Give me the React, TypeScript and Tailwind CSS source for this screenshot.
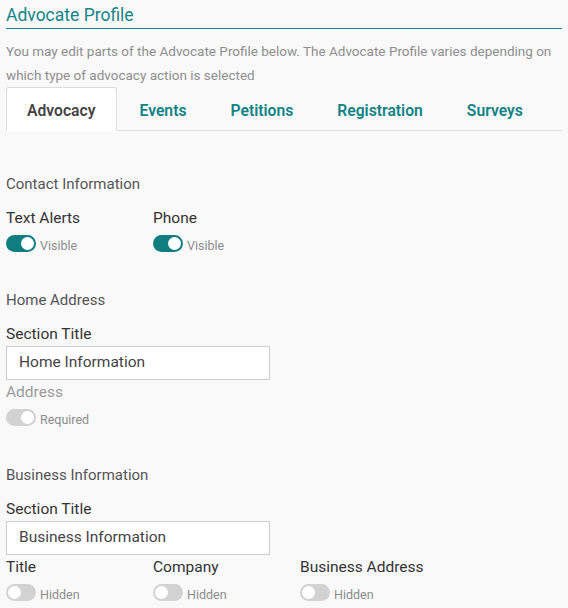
import React from "react";

const F = { fontFamily: "Roboto, 'Open Sans', sans-serif" };

function Toggle({ on, disabled, label }: { on: boolean; disabled?: boolean; label: string }) {
  const bg = disabled ? "bg-[#d2d2d2]" : on ? "bg-[#107e81]" : "bg-[#d2d2d2]";
  return (
    <div className="flex items-center h-[17px]">
      <div className={`relative w-[30px] h-[17px] rounded-full ${bg}`}>
        <div
          className={`absolute top-[2px] w-[13px] h-[13px] rounded-full bg-white ${on ? "left-[15px]" : "left-[2px]"}`}
        />
      </div>
      <span className="ml-[4px] mt-[3px] text-[12.5px] leading-[17px] text-[#8c8c8c]">{label}</span>
    </div>
  );
}

function Field({ label, on, disabled, state, muted }: { label: string; on: boolean; disabled?: boolean; state: string; muted?: boolean }) {
  return (
    <div className="w-[147px]">
      <div className={`text-[15.5px] leading-[22px] ${muted ? "text-[#9a9a9a]" : "text-[#333]"}`}>{label}</div>
      <div className="mt-[6px]">
        <Toggle on={on} disabled={disabled} label={state} />
      </div>
    </div>
  );
}

export default function App() {
  const tabs = ["Advocacy", "Events", "Petitions", "Registration", "Surveys"];
  return (
    <div className="w-[568px] h-[608px] bg-[#f9f9f9] px-[6px] overflow-hidden" style={F}>
      <div className="pt-[5px] pb-[3px] border-b border-[#138487] text-[17.5px] leading-[20px] text-[#138487]">
        Advocate Profile
      </div>
      <p className="mt-[10px] text-[13.5px] leading-[24px] text-[#8e8e8e]">
        You may edit parts of the Advocate Profile below. The Advocate Profile varies depending on which type of advocacy action is selected
      </p>
      <div className="flex border-b border-[#dddddd] h-[44px]">
        {tabs.map((t, i) => (
          <div
            key={t}
            className={`px-[20px] pt-[3px] mr-[2px] flex items-center text-[15.7px] font-semibold -mb-px ${
              i === 0
                ? "bg-white border border-[#dddddd] border-b-white rounded-t-[3px] text-[#444]"
                : "border border-transparent text-[#118386]"
            }`}
          >
            {t}
          </div>
        ))}
      </div>

      <div className="mt-[43px] text-[15px] leading-[20px] text-[#555]">Contact Information</div>
      <div className="mt-[13px] flex">
        <Field label="Text Alerts" on state="Visible" />
        <Field label="Phone" on state="Visible" />
      </div>

      <div className="mt-[38px] text-[15px] leading-[20px] text-[#555]">Home Address</div>
      <div className="mt-[13px] text-[15.5px] leading-[22px] text-[#333]">Section Title</div>
      <div className="mt-[1px] w-[264px] h-[34px] border border-[#cccccc] bg-white flex items-center pl-[12px] text-[15.5px] text-[#444]">
        Home Information
      </div>
      <div className="mt-[1px] flex">
        <Field label="Address" on disabled muted state="Required" />
      </div>

      <div className="mt-[39px] text-[15px] leading-[20px] text-[#555]">Business Information</div>
      <div className="mt-[13px] text-[15.5px] leading-[22px] text-[#333]">Section Title</div>
      <div className="mt-[1px] w-[264px] h-[34px] border border-[#cccccc] bg-white flex items-center pl-[12px] text-[15.5px] text-[#444]">
        Business Information
      </div>
      <div className="mt-[1px] flex">
        <Field label="Title" on={false} state="Hidden" />
        <Field label="Company" on={false} state="Hidden" />
        <Field label="Business Address" on={false} state="Hidden" />
      </div>
    </div>
  );
}
